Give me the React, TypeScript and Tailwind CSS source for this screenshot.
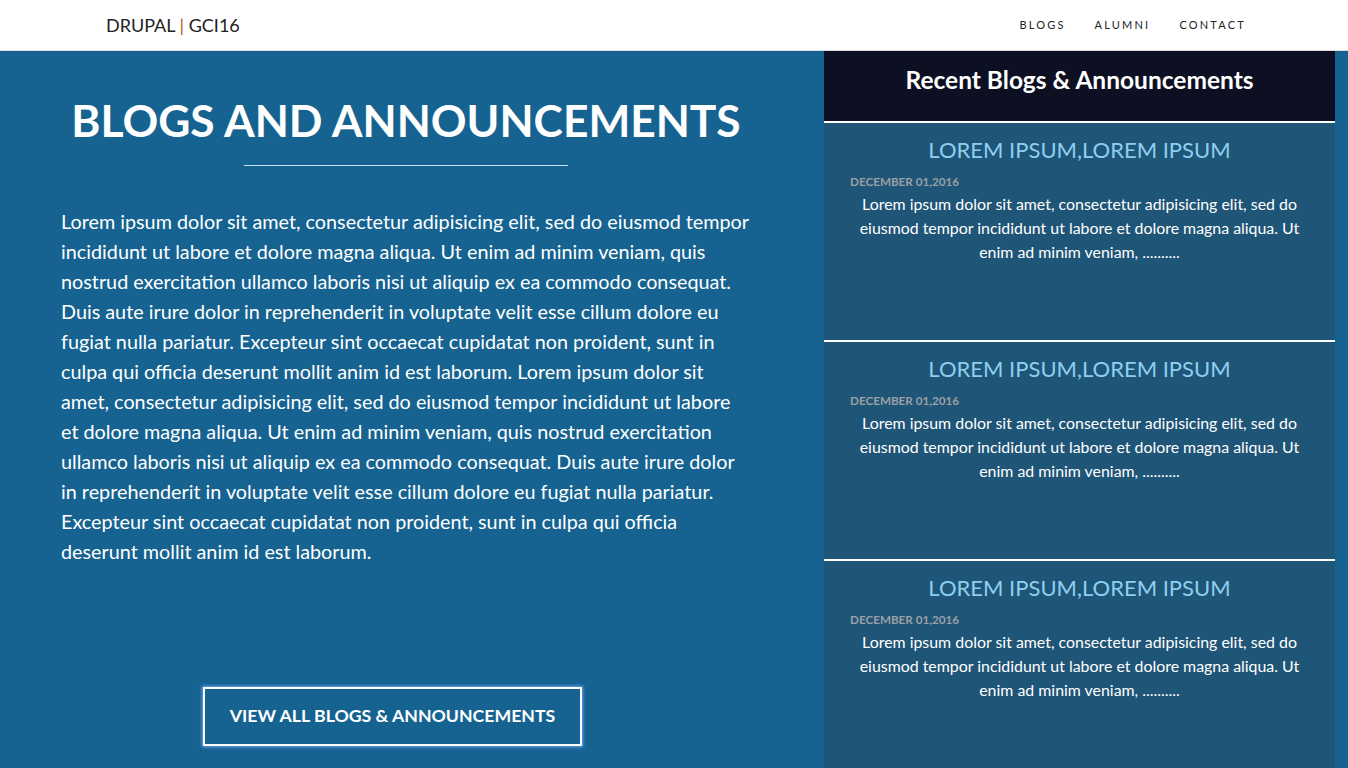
const POSTS = [1, 2, 3];

const NAV = ["BLOGS", "ALUMNI", "CONTACT"];

const BODY =
  "Lorem ipsum dolor sit amet, consectetur adipisicing elit, sed do eiusmod tempor incididunt ut labore et dolore magna aliqua. Ut enim ad minim veniam, quis nostrud exercitation ullamco laboris nisi ut aliquip ex ea commodo consequat. Duis aute irure dolor in reprehenderit in voluptate velit esse cillum dolore eu fugiat nulla pariatur. Excepteur sint occaecat cupidatat non proident, sunt in culpa qui officia deserunt mollit anim id est laborum. Lorem ipsum dolor sit amet, consectetur adipisicing elit, sed do eiusmod tempor incididunt ut labore et dolore magna aliqua. Ut enim ad minim veniam, quis nostrud exercitation ullamco laboris nisi ut aliquip ex ea commodo consequat. Duis aute irure dolor in reprehenderit in voluptate velit esse cillum dolore eu fugiat nulla pariatur. Excepteur sint occaecat cupidatat non proident, sunt in culpa qui officia deserunt mollit anim id est laborum.";

export default function App() {
  return (
    <div className="flex h-[768px] flex-col overflow-hidden bg-[#166391] font-['Lato','Open_Sans',sans-serif]">
      <header className="flex h-[51px] shrink-0 items-center justify-between border-b border-[#dcdcdc] bg-white pl-[106px] pr-[102px]">
        <div className="text-[18px] text-[#222]">
          DRUPAL <span className="text-[#b5541b]">|</span> GCI16
        </div>
        <nav className="flex gap-[29px]">
          {NAV.map((item) => (
            <span key={item} className="text-[11px] tracking-[2.2px] text-[#222]">
              {item}
            </span>
          ))}
        </nav>
      </header>

      <div className="flex min-h-0 flex-1">
        <main className="flex w-[812px] shrink-0 flex-col px-[61px] pt-[40px]">
          <h1 className="whitespace-nowrap text-center text-[44.3px] font-bold leading-[58px] text-white">
            BLOGS AND ANNOUNCEMENTS
          </h1>
          <div className="mx-auto mt-[16px] h-px w-[324px] bg-[#bfe3f5]" />
          <p className="mt-[40px] text-[19.8px] leading-[30px] text-white">{BODY}</p>
          <button className="ml-[142px] mt-[121px] h-[59px] w-[379px] border-2 border-white text-[17.7px] font-bold text-white shadow-[0_0_3px_1px_rgba(120,170,255,0.9)]">
            VIEW ALL BLOGS &amp; ANNOUNCEMENTS
          </button>
        </main>

        <aside className="ml-[12px] flex w-[511px] shrink-0 flex-col">
          <div className="flex h-[70px] shrink-0 items-start justify-center bg-[#0d1022] pt-[12px] text-[24.5px] font-bold leading-[34px] text-white">
            Recent Blogs &amp; Announcements
          </div>
          {POSTS.map((n) => (
            <section
              key={n}
              className="h-[219px] shrink-0 border-t-2 border-white bg-[#1f5577] px-[26px] pt-[13px]"
            >
              <h2 className="text-center text-[22px] leading-[28px] text-[#8ecff0]">
                LOREM IPSUM,LOREM IPSUM
              </h2>
              <div className="mt-[9px] text-[11.7px] font-bold leading-[16px] text-[#9aa0a6]">
                DECEMBER 01,2016
              </div>
              <p className="mt-[3px] text-center text-[15.9px] leading-[24px] text-white">
                Lorem ipsum dolor sit amet, consectetur adipisicing elit, sed do eiusmod tempor
                incididunt ut labore et dolore magna aliqua. Ut enim ad minim veniam, ..........
              </p>
            </section>
          ))}
        </aside>
      </div>
    </div>
  );
}
